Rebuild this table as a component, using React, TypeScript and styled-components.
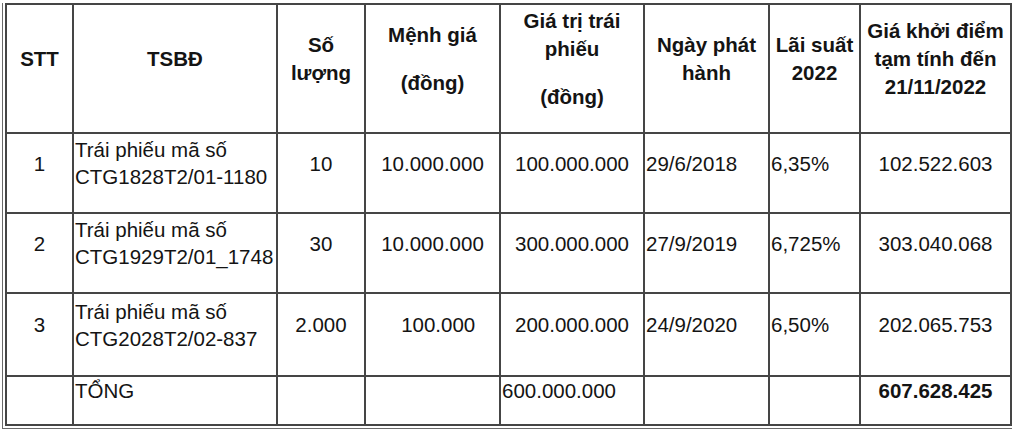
import React from "react";
import styled, { createGlobalStyle } from "styled-components";

const GlobalStyle = createGlobalStyle`
  html, body {
    margin: 0;
    padding: 0;
    background: #ffffff;
  }
  body {
    font-family: "Liberation Sans", Arial, sans-serif;
    color: #141414;
  }
`;

const Page = styled.div`
  padding: 3px 0 0 2px;
`;

// outer frame: the reference shows a second thin line on the left and bottom edge
const Frame = styled.div`
  display: inline-block;
  border-left: 1px solid #6a6a6a;
  border-bottom: 1px solid #6a6a6a;
  padding: 0 0 2px 2px;
`;

const Sheet = styled.table`
  border-collapse: collapse;
  table-layout: fixed;
  width: 1005px;
`;

const Row = styled.tr<{ $h: number }>`
  height: ${(p) => p.$h}px;
`;

const HeadCell = styled.th`
  border: 2px solid #454545;
  padding: 0 2px;
  vertical-align: middle;
  text-align: center;
  font-size: 20.5px;
  font-weight: 700;
  line-height: 28px;
`;

const Cell = styled.td<{ $align?: "left" | "center"; $bold?: boolean }>`
  border: 2px solid #454545;
  padding: 0 1px;
  vertical-align: middle;
  text-align: ${(p) => p.$align ?? "center"};
  font-size: 20.5px;
  font-weight: ${(p) => (p.$bold ? 700 : 400)};
  line-height: 27px;
  white-space: nowrap;
`;

const Para = styled.p`
  margin: 0 0 20px;
`;

const columns = [67, 204, 88, 135, 144, 125, 91, 151];

type Bond = {
  stt: string;
  code: string;
  qty: string;
  face: string;
  value: string;
  issued: string;
  rate: string;
  price: string;
  h: number;
};

const bonds: Bond[] = [
  {
    stt: "1",
    code: "CTG1828T2/01-1180",
    qty: "10",
    face: "10.000.000",
    value: "100.000.000",
    issued: "29/6/2018",
    rate: "6,35%",
    price: "102.522.603",
    h: 80,
  },
  {
    stt: "2",
    code: "CTG1929T2/01_1748",
    qty: "30",
    face: "10.000.000",
    value: "300.000.000",
    issued: "27/9/2019",
    rate: "6,725%",
    price: "303.040.068",
    h: 80,
  },
  {
    stt: "3",
    code: "CTG2028T2/02-837",
    qty: "2.000",
    face: "\u00a0\u00a0100.000",
    value: "200.000.000",
    issued: "24/9/2020",
    rate: "6,50%",
    price: "202.065.753",
    h: 83,
  },
];

export default function App() {
  return (
    <Page>
      <GlobalStyle />
      <Frame>
        <Sheet>
          <colgroup>
            {columns.map((w, i) => (
              <col key={i} style={{ width: w }} />
            ))}
          </colgroup>
          <thead>
            <Row $h={129}>
              <HeadCell>
                <Para>STT</Para>
              </HeadCell>
              <HeadCell>
                <Para>TSBĐ</Para>
              </HeadCell>
              <HeadCell>
                <Para>
                  Số
                  <br />
                  lượng
                </Para>
              </HeadCell>
              <HeadCell>
                <Para>Mệnh giá</Para>
                <Para>(đồng)</Para>
              </HeadCell>
              <HeadCell>
                <Para>
                  Giá trị trái
                  <br />
                  phiếu
                </Para>
                <Para>(đồng)</Para>
              </HeadCell>
              <HeadCell>
                <Para>
                  Ngày phát
                  <br />
                  hành
                </Para>
              </HeadCell>
              <HeadCell>
                <Para>
                  Lãi suất
                  <br />
                  2022
                </Para>
              </HeadCell>
              <HeadCell>
                <Para>
                  Giá khởi điểm
                  <br />
                  tạm tính đến
                  <br />
                  21/11/2022
                </Para>
              </HeadCell>
            </Row>
          </thead>
          <tbody>
            {bonds.map((b) => (
              <Row key={b.stt} $h={b.h}>
                <Cell>
                  <Para>{b.stt}</Para>
                </Cell>
                <Cell $align="left">
                  <Para>
                    Trái phiếu mã số
                    <br />
                    {b.code}
                  </Para>
                </Cell>
                <Cell>
                  <Para>{b.qty}</Para>
                </Cell>
                <Cell>
                  <Para>{b.face}</Para>
                </Cell>
                <Cell>
                  <Para>{b.value}</Para>
                </Cell>
                <Cell $align="left">
                  <Para>{b.issued}</Para>
                </Cell>
                <Cell $align="left">
                  <Para>{b.rate}</Para>
                </Cell>
                <Cell>
                  <Para>{b.price}</Para>
                </Cell>
              </Row>
            ))}
            <Row $h={49}>
              <Cell />
              <Cell $align="left">
                <Para>TỔNG</Para>
              </Cell>
              <Cell />
              <Cell />
              <Cell $align="left">
                <Para>600.000.000</Para>
              </Cell>
              <Cell />
              <Cell />
              <Cell $bold>
                <Para>607.628.425</Para>
              </Cell>
            </Row>
          </tbody>
        </Sheet>
      </Frame>
    </Page>
  );
}
